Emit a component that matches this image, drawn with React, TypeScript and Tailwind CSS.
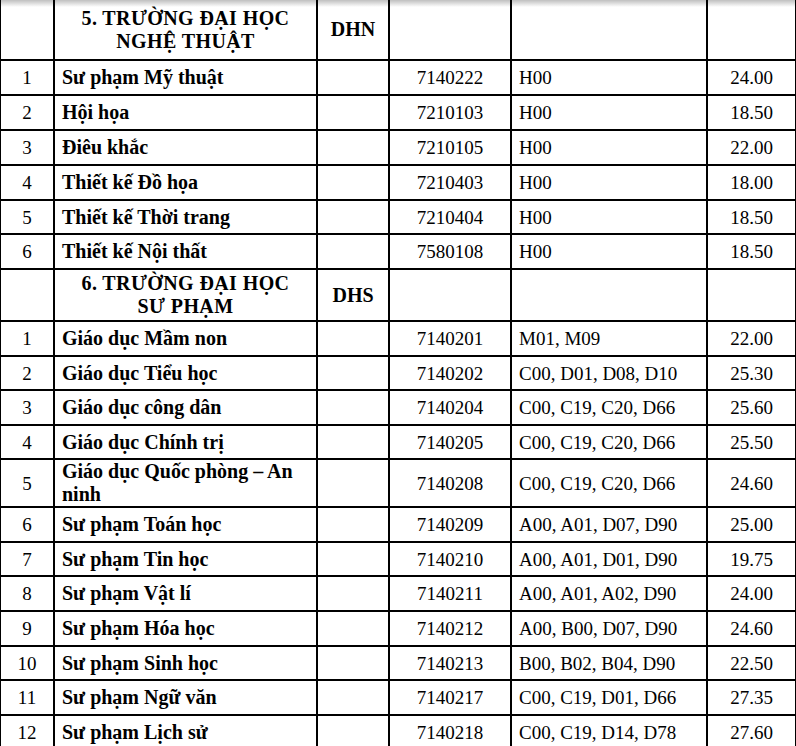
type Row = { no: string; name: string; code: string; combo: string; score: string; h: string };

type Section = { title: [string, string]; id: string; h: string; rows: Row[] };

const sections: Section[] = [
  {
    title: ["5. TRƯỜNG ĐẠI HỌC", "NGHỆ THUẬT"],
    id: "DHN",
    h: "h-[61px]",
    rows: [
      { no: "1", name: "Sư phạm Mỹ thuật", code: "7140222", combo: "H00", score: "24.00", h: "h-[35px]" },
      { no: "2", name: "Hội họa", code: "7210103", combo: "H00", score: "18.50", h: "h-[35px]" },
      { no: "3", name: "Điêu khắc", code: "7210105", combo: "H00", score: "22.00", h: "h-[35px]" },
      { no: "4", name: "Thiết kế Đồ họa", code: "7210403", combo: "H00", score: "18.00", h: "h-[35px]" },
      { no: "5", name: "Thiết kế Thời trang", code: "7210404", combo: "H00", score: "18.50", h: "h-[34px]" },
      { no: "6", name: "Thiết kế Nội thất", code: "7580108", combo: "H00", score: "18.50", h: "h-[35px]" },
    ],
  },
  {
    title: ["6. TRƯỜNG ĐẠI HỌC", "SƯ PHẠM"],
    id: "DHS",
    h: "h-[52px]",
    rows: [
      { no: "1", name: "Giáo dục Mầm non", code: "7140201", combo: "M01, M09", score: "22.00", h: "h-[35px]" },
      { no: "2", name: "Giáo dục Tiểu học", code: "7140202", combo: "C00, D01, D08, D10", score: "25.30", h: "h-[34px]" },
      { no: "3", name: "Giáo dục công dân", code: "7140204", combo: "C00, C19, C20, D66", score: "25.60", h: "h-[35px]" },
      { no: "4", name: "Giáo dục Chính trị", code: "7140205", combo: "C00, C19, C20, D66", score: "25.50", h: "h-[34px]" },
      { no: "5", name: "Giáo dục Quốc phòng – An ninh", code: "7140208", combo: "C00, C19, C20, D66", score: "24.60", h: "h-[48px]" },
      { no: "6", name: "Sư phạm Toán học", code: "7140209", combo: "A00, A01, D07, D90", score: "25.00", h: "h-[35px]" },
      { no: "7", name: "Sư phạm Tin học", code: "7140210", combo: "A00, A01, D01, D90", score: "19.75", h: "h-[34px]" },
      { no: "8", name: "Sư phạm Vật lí", code: "7140211", combo: "A00, A01, A02, D90", score: "24.00", h: "h-[35px]" },
      { no: "9", name: "Sư phạm Hóa học", code: "7140212", combo: "A00, B00, D07, D90", score: "24.60", h: "h-[35px]" },
      { no: "10", name: "Sư phạm Sinh học", code: "7140213", combo: "B00, B02, B04, D90", score: "22.50", h: "h-[34px]" },
      { no: "11", name: "Sư phạm Ngữ văn", code: "7140217", combo: "C00, C19, D01, D66", score: "27.35", h: "h-[35px]" },
      { no: "12", name: "Sư phạm Lịch sử", code: "7140218", combo: "C00, C19, D14, D78", score: "27.60", h: "h-[35px]" },
    ],
  },
];

const cell = "border-2 border-black align-middle";

export default function App() {
  return (
    <div className="relative h-[746px] w-[796px] overflow-hidden bg-white text-black font-['Liberation_Serif','Times_New_Roman',serif] text-[19px] leading-[23px]">
      <table className="-ml-[1px] -mt-[2px] w-[796px] table-fixed border-collapse">
        <colgroup>
          <col className="w-[54px]" />
          <col className="w-[263px]" />
          <col className="w-[72px]" />
          <col className="w-[122px]" />
          <col className="w-[196px]" />
          <col className="w-[89px]" />
        </colgroup>
        <tbody>
          {sections.map((s, si) => (
            <>
              <tr key={`h${si}`} className={s.h}>
                <td className={cell}></td>
                <td className={`${cell} text-center text-[20px] font-bold tracking-[0.4px]`}>
                  {s.title[0]}
                  <br />
                  {s.title[1]}
                </td>
                <td className={`${cell} text-center text-[20px] font-bold`}>{s.id}</td>
                <td className={cell}></td>
                <td className={cell}></td>
                <td className={cell}></td>
              </tr>
              {s.rows.map((r) => (
                <tr key={`${si}-${r.no}`} className={r.h}>
                  <td className={`${cell} text-center`}>{r.no}</td>
                  <td className={`${cell} pl-[7px] pr-2 text-[20px] font-bold`}>{r.name}</td>
                  <td className={cell}></td>
                  <td className={`${cell} text-center`}>{r.code}</td>
                  <td className={`${cell} pl-[7px]`}>{r.combo}</td>
                  <td className={`${cell} text-center`}>{r.score}</td>
                </tr>
              ))}
            </>
          ))}
        </tbody>
      </table>
      <div className="pointer-events-none absolute inset-x-0 top-0 h-[7px] bg-gradient-to-b from-black/25 to-transparent" />
    </div>
  );
}
